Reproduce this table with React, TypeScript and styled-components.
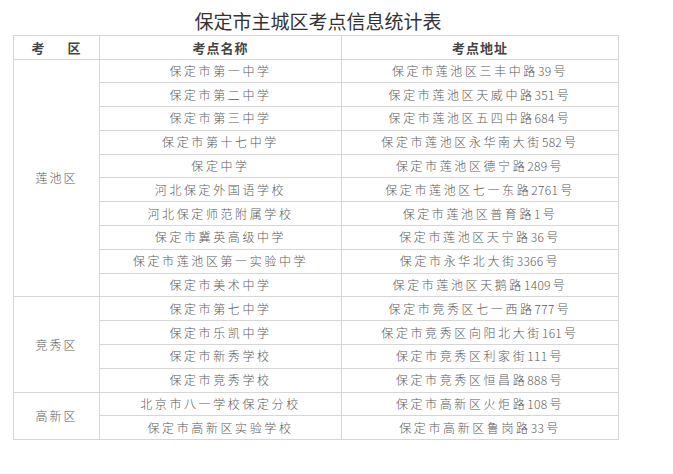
import React from "react";
import styled, { createGlobalStyle } from "styled-components";

const GlobalStyle = createGlobalStyle`
    html, body {
        margin: 0;
        padding: 0;
        background: #ffffff;
    }
    body {
        font-family: "Noto Sans CJK SC", "Noto Sans", sans-serif;
    }
`;

interface Group {
    district: string,
    schools: [string, string][],
}

const groups: Group[] = [
    {
        district: "莲池区",
        schools: [
            ["保定市第一中学", "保定市莲池区三丰中路39号"],
            ["保定市第二中学", "保定市莲池区天威中路351号"],
            ["保定市第三中学", "保定市莲池区五四中路684号"],
            ["保定市第十七中学", "保定市莲池区永华南大街582号"],
            ["保定中学", "保定市莲池区德宁路289号"],
            ["河北保定外国语学校", "保定市莲池区七一东路2761号"],
            ["河北保定师范附属学校", "保定市莲池区普育路1号"],
            ["保定市冀英高级中学", "保定市莲池区天宁路36号"],
            ["保定市莲池区第一实验中学", "保定市永华北大街3366号"],
            ["保定市美术中学", "保定市莲池区天鹅路1409号"],
        ],
    },
    {
        district: "竞秀区",
        schools: [
            ["保定市第七中学", "保定市竞秀区七一西路777号"],
            ["保定市乐凯中学", "保定市竞秀区向阳北大街161号"],
            ["保定市新秀学校", "保定市竞秀区利家街111号"],
            ["保定市竞秀学校", "保定市竞秀区恒昌路888号"],
        ],
    },
    {
        district: "高新区",
        schools: [
            ["北京市八一学校保定分校", "保定市高新区火炬路108号"],
            ["保定市高新区实验学校", "保定市高新区鲁岗路33号"],
        ],
    },
];

const Page = styled.div`
    width: 602px;
    margin-left: 13px;
    padding-top: 6px;
`;

const Title = styled.h1`
    margin: 0;
    height: 29px;
    font-size: 19px;
    font-weight: 400;
    line-height: 29px;
    color: #333333;
    text-align: center;
    padding-left: 8px;
`;

const Table = styled.table`
    width: 602px;
    border-collapse: collapse;
    table-layout: fixed;
`;

const HeadCell = styled.th<{ $w: number }>`
    width: ${(p) => p.$w}px;
    height: 22.5px;
    padding: 0;
    border: 1px solid #d6d6d6;
    font-size: 13px;
    font-weight: 700;
    color: #444444;
    letter-spacing: 1px;
    text-align: center;
    vertical-align: middle;
`;

const Cell = styled.td`
    height: 22.8px;
    padding: 0;
    border: 1px solid #d6d6d6;
    font-size: 12px;
    line-height: 16px;
    font-weight: 300;
    color: #5a5a5a;
    letter-spacing: 2.6px;
    text-align: center;
    vertical-align: middle;
    white-space: nowrap;
`;

const DistrictCell = styled(Cell)`
    letter-spacing: 2px;
`;

const Digits = styled.span`
    letter-spacing: 0.3px;
    margin-right: 2px;
`;

const Gap = styled.span`
    display: inline-block;
    width: 22px;
`;

// split an address so the house number keeps tight spacing
const Address = ({ text }: { text: string }) => {
    const m = text.match(/^(.*?)(\d+)(号)$/);
    if (!m) return <>{text}</>;
    return (
        <>
            {m[1]}<Digits>{m[2]}</Digits>{m[3]}
        </>
    );
};

export default function App() {
    return (
        <>
            <GlobalStyle />
            <Page>
                <Title>保定市主城区考点信息统计表</Title>
                <Table>
                    <thead>
                        <tr>
                            <HeadCell $w={85}>考<Gap />区</HeadCell>
                            <HeadCell $w={241}>考点名称</HeadCell>
                            <HeadCell $w={276}>考点地址</HeadCell>
                        </tr>
                    </thead>
                    <tbody>
                        {groups.map((g) =>
                            g.schools.map(([name, addr], i) => (
                                <tr key={g.district + i}>
                                    {i === 0 && (
                                        <DistrictCell rowSpan={g.schools.length}>
                                            {g.district}
                                        </DistrictCell>
                                    )}
                                    <Cell>{name}</Cell>
                                    <Cell><Address text={addr} /></Cell>
                                </tr>
                            ))
                        )}
                    </tbody>
                </Table>
            </Page>
        </>
    );
}
